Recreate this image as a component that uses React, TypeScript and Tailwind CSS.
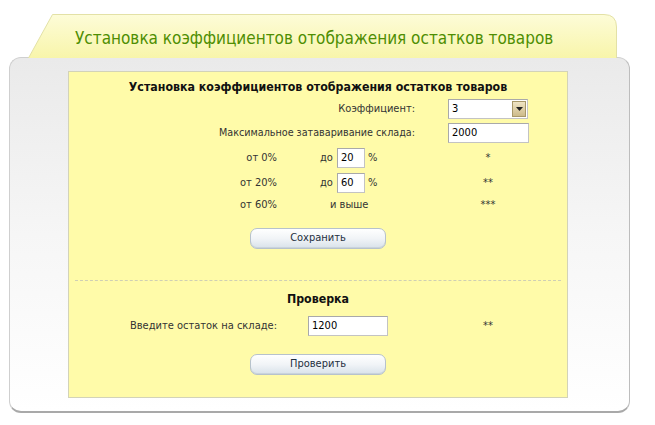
const font = { fontFamily: '"DejaVu Sans Condensed", "DejaVu Sans", sans-serif' };

function TextInput({ value, width }: { value: string; width: string }) {
  return (
    <div
      className={`${width} flex h-[20px] items-center border border-[#c3c3c3] border-t-[#a9a9a9] border-l-[#a9a9a9] bg-white pl-[3px] text-[11px] text-black`}
    >
      {value}
    </div>
  );
}

function Button({ label }: { label: string }) {
  return (
    <div className="mx-auto flex h-[21px] w-[136px] items-center justify-center rounded-[7px] border border-[#b7c2cc] bg-gradient-to-b from-white via-[#f1f4f7] to-[#d9e2ea] text-[11px] text-[#1e2f40] shadow-[inset_0_-1px_0_#c9d3dc]">
      {label}
    </div>
  );
}

function Stars({ value }: { value: string }) {
  return <div className="w-[96px] text-center text-[11px] text-[#333]">{value}</div>;
}

export default function App() {
  return (
    <div className="h-[425px] w-[655px] overflow-hidden bg-white" style={font}>
      {/* tab */}
      <div className="relative ml-[28px] mt-[14px] h-[43px] w-[589px]">
        <svg className="absolute inset-0" width="589" height="44" viewBox="0 0 589 44">
          <defs>
            <linearGradient id="tabFill" x1="0" y1="0" x2="0" y2="1">
              <stop offset="0" stopColor="#fdfcd8" />
              <stop offset="1" stopColor="#f8f5aa" />
            </linearGradient>
          </defs>
          <path
            d="M0.5 44 L24.5 0.5 H576 Q588.5 0.5 588.5 13 V44"
            fill="url(#tabFill)"
            stroke="#e3e1a6"
          />
        </svg>
        <div className="relative whitespace-nowrap pl-[47px] pt-[13px] text-[17px] leading-[22px] text-[#4e8e02]">
          Установка коэффициентов отображения остатков товаров
        </div>
      </div>

      {/* panel */}
      <div className="ml-[9px] h-[356px] w-[621px] rounded-[12px] border border-[#cfcfcf] border-b-2 border-b-[#a9a9a9] border-r-[#bdbdbd] bg-gradient-to-b from-[#eaeaea] via-[#f6f6f6] to-white pl-[58px] pt-[13px]">
        <div className="h-[327px] w-[500px] border border-[#d3d3b8] bg-[#fffba9] text-[11px] text-[#333]">
          <div className="mt-[5px] flex h-[20px] items-center justify-center text-[12.3px] font-bold text-[#111]">
            Установка коэффициентов отображения остатков товаров
          </div>

          <div className="mt-[2px] flex h-[20px] items-center">
            <div className="w-[346px] text-right">Коэффициент:</div>
            <div className="ml-[33px] flex h-[20px] w-[80px] items-center border border-[#c3c3c3] border-t-[#a9a9a9] border-l-[#a9a9a9] bg-white">
              <span className="flex-1 pl-[3px] text-black">3</span>
              <span className="mr-[1px] flex h-[16px] w-[14px] items-center justify-center border border-[#a89868] bg-gradient-to-b from-[#efe4c4] to-[#cdbb8a]">
                <svg width="7" height="4" viewBox="0 0 7 4">
                  <path d="M0 0 H7 L3.5 4 Z" fill="#222" />
                </svg>
              </span>
            </div>
          </div>

          <div className="mt-[4px] flex h-[20px] items-center">
            <div className="w-[346px] text-right text-[10.7px]">Максимальное затаваривание склада:</div>
            <div className="ml-[33px]">
              <TextInput value="2000" width="w-[81px]" />
            </div>
          </div>

          <div className="mt-[5px] flex h-[20px] items-center">
            <div className="w-[208px] text-right">от 0%</div>
            <div className="flex w-[163px] items-center pl-[43px]">
              <span>до</span>
              <span className="ml-[4px]">
                <TextInput value="20" width="w-[28px]" />
              </span>
              <span className="ml-[3px]">%</span>
            </div>
            <Stars value="*" />
          </div>

          <div className="mt-[5px] flex h-[20px] items-center">
            <div className="w-[208px] text-right">от 20%</div>
            <div className="flex w-[163px] items-center pl-[43px]">
              <span>до</span>
              <span className="ml-[4px]">
                <TextInput value="60" width="w-[28px]" />
              </span>
              <span className="ml-[3px]">%</span>
            </div>
            <Stars value="**" />
          </div>

          <div className="mt-[2px] flex h-[20px] items-center">
            <div className="w-[208px] text-right">от 60%</div>
            <div className="w-[163px] pl-[53px]">и выше</div>
            <Stars value="***" />
          </div>

          <div className="mt-[13px]">
            <Button label="Сохранить" />
          </div>

          <div className="mx-[6px] mt-[31px] border-t border-dashed border-[#cfcfb4]" />

          <div className="mt-[8px] flex h-[20px] items-center justify-center text-[12.3px] font-bold text-[#111]">
            Проверка
          </div>

          <div className="mt-[7px] flex h-[20px] items-center">
            <div className="w-[208px] text-right">Введите остаток на складе:</div>
            <div className="w-[163px] pl-[31px]">
              <TextInput value="1200" width="w-[80px]" />
            </div>
            <Stars value="**" />
          </div>

          <div className="mt-[18px]">
            <Button label="Проверить" />
          </div>
        </div>
      </div>
    </div>
  );
}
